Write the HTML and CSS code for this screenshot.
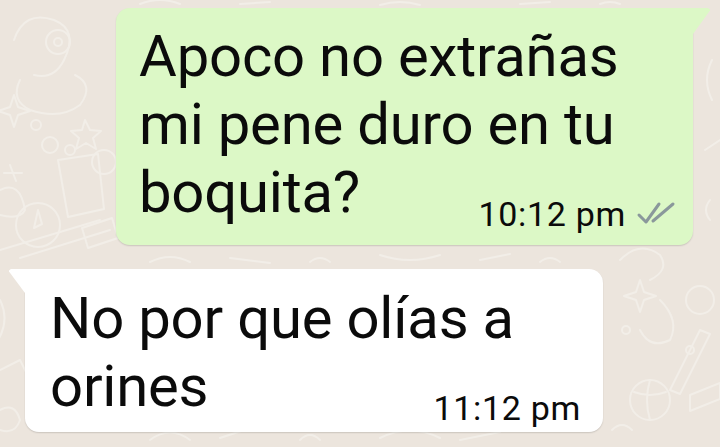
FILE: index.html
```html
<!DOCTYPE html>
<html lang="es">
<head>
<meta charset="utf-8">
<title>Chat</title>
<link rel="stylesheet" href="styles.css">
</head>
<body>
<div class="screen">
  <svg class="doodles" width="720" height="447" viewBox="0 0 720 447" aria-hidden="true">
    <g fill="none" stroke="#f2eee8" stroke-width="2" stroke-linecap="round" stroke-linejoin="round">
      <path d="M14 40 q10 -30 40 -20 q25 10 10 40 q-10 20 -30 15"/>
      <circle cx="58" cy="42" r="12"/>
      <circle cx="58" cy="42" r="4"/>
      <path d="M20 80 q-10 20 10 30 q30 10 50 -5 q15 -20 -5 -30"/>
      <path d="M14 95 l4 12 l12 4 l-12 4 l-4 12 l-4 -12 l-12 -4 l12 -4 z"/>
      <path d="M85 120 l5 10 l11 1 l-8 7 l3 11 l-10 -6 l-10 6 l3 -11 l-8 -7 l11 -1 z"/>
      <circle cx="36" cy="125" r="5"/>
      <circle cx="50" cy="145" r="8"/>
      <circle cx="70" cy="150" r="5"/>
      <path d="M10 165 l6 16 M4 173 l18 0"/>
      <path d="M58 160 l40 -6 l6 55 l-36 8 z"/>
      <circle cx="104" cy="162" r="12"/>
      <path d="M0 190 q20 -10 25 20 q-5 10 -25 5"/>
      <circle cx="38" cy="225" r="22"/>
      <path d="M38 210 l4 14 l-8 4 z"/>
      <path d="M82 228 l30 -10 l6 20 l-30 10 z"/>
      <path d="M0 250 l100 -30 M20 258 l90 -28"/>
      <path d="M620 260 q20 -20 40 -5 q10 15 -10 25"/>
      <path d="M640 280 l4 12 l12 4 l-12 4 l-4 12 l-4 -12 l-12 -4 l12 -4 z"/>
      <circle cx="700" cy="300" r="14"/>
      <path d="M660 300 q20 20 10 40 q-20 10 -30 -10"/>
      <circle cx="626" cy="330" r="4"/>
      <circle cx="690" cy="350" r="4"/>
      <path d="M700 330 l-30 60 l10 4 l30 -60 z"/>
      <circle cx="650" cy="400" r="20"/>
      <path d="M634 392 q16 6 32 0 M650 380 q-6 20 0 40"/>
      <path d="M690 395 l30 -12 l0 16 l-30 12 z"/>
      <path d="M612 430 q10 -10 20 0"/>
      <path d="M0 300 q10 20 -2 40 M0 370 l20 -10 l10 20"/>
      <path d="M0 410 q15 -8 20 10 q-5 15 -20 10"/>
      <path d="M150 440 q20 -15 40 0 M220 438 l30 -10 M300 440 q10 -10 20 0 M380 438 q30 -15 60 0 M460 440 l40 -8"/>
      <path d="M150 262 q20 -10 40 0 M230 258 l40 5 M310 262 q10 -8 20 0 M380 255 q30 10 60 0 M480 260 l30 -6 M540 262 q10 -8 20 0"/>
      <path d="M140 4 q20 -8 40 0 M240 4 l30 -2 M380 5 q20 -6 40 0 M520 4 l30 -2 M600 4 q10 -4 20 0"/>
      <path d="M712 60 q-10 20 0 40 M705 150 l15 -10 M710 200 q-8 10 0 20"/>
    </g>
  </svg>

  <main class="chat">
    <div class="bubble out">
      <p class="text">Apoco no extrañas mi pene duro en tu boquita?<span class="meta"><span class="time">10:12 pm</span><svg class="ticks" width="40" height="24" viewBox="0 0 40 24" aria-hidden="true"><path d="M3 14 L10 21 L23 3" fill="none" stroke="#8a989b" stroke-width="3" stroke-linecap="round" stroke-linejoin="round"/><path d="M17 20 L37 3" fill="none" stroke="#8a989b" stroke-width="3" stroke-linecap="round"/></svg></span></p>
    </div>

    <div class="bubble in">
      <p class="text">No por que olías a orines<span class="meta"><span class="time">11:12 pm</span></span></p>
    </div>
  </main>
</div>
</body>
</html>
```

FILE: styles.css
```css
* {
  box-sizing: border-box;
}

html, body {
  margin: 0;
  padding: 0;
}

body {
  background: #ece5dd;
  font-family: Roboto, "Noto Sans", "Liberation Sans", sans-serif;
  color: #0b0b0b;
}

.screen {
  position: relative;
  width: 720px;
  height: 447px;
  overflow: hidden;
  background: #ece5dd;
}

.doodles {
  position: absolute;
  left: 0;
  top: 0;
}

.chat {
  position: relative;
  display: flex;
  flex-direction: column;
  gap: 24px;
  padding-top: 8px;
}

.bubble {
  position: relative;
  border-radius: 14px;
  box-shadow: 0 1px 1.5px rgba(0, 0, 0, 0.14);
}

.text {
  margin: 0;
  font-size: 58px;
  line-height: 68px;
  letter-spacing: -0.2px;
}

.meta {
  float: right;
  display: flex;
  align-items: center;
  gap: 10px;
  margin-top: 39px;
  margin-bottom: -6px;
  margin-left: 12px;
}

.time {
  font-size: 34px;
  line-height: 34px;
  letter-spacing: 0.7px;
}

.ticks {
  display: block;
  margin-top: -3px;
}

.out {
  align-self: flex-end;
  width: 577px;
  margin-right: 27px;
  padding: 14px 17px 19px 23px;
  background: #dcf8c6;
  border-top-right-radius: 0;
}

.out::after {
  content: "";
  position: absolute;
  top: 0;
  right: -17px;
  width: 17px;
  height: 26px;
  background: #dcf8c6;
  clip-path: polygon(0 0, 88% 0, 100% 6%, 100% 10%, 0 100%);
}

.in {
  align-self: flex-start;
  width: 578px;
  margin-left: 25px;
  padding: 15px 22px 12px 25px;
  background: #ffffff;
  border-top-left-radius: 0;
}

.in::before {
  content: "";
  position: absolute;
  top: 0;
  left: -16px;
  width: 16px;
  height: 24px;
  background: #ffffff;
  clip-path: polygon(100% 0, 12% 0, 0 6%, 0 10%, 100% 100%);
}
```
